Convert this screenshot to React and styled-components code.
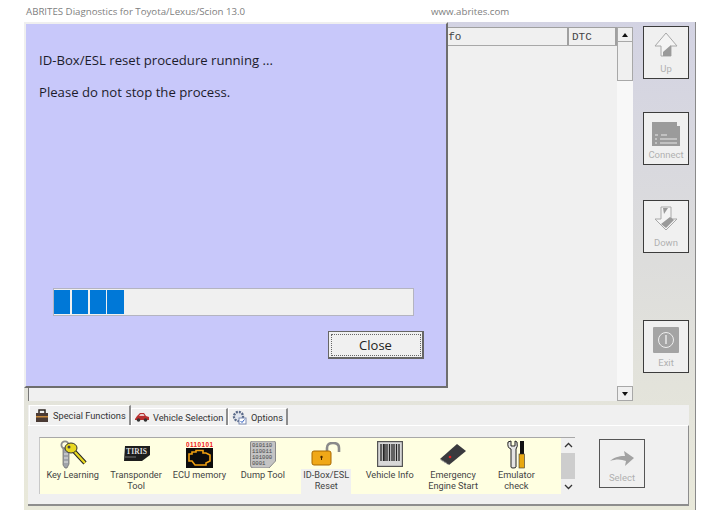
import React from "react";
import styled, { createGlobalStyle } from "styled-components";

const Global = createGlobalStyle`
  html, body { margin: 0; padding: 0; background: #fff; }
  body { width: 719px; height: 510px; overflow: hidden; font-family: Roboto, "Liberation Sans", sans-serif; }
`;

const Page = styled.div`
  width: 719px;
  height: 510px;
  position: relative;
  background: #fff;
  overflow: hidden;
`;

const TitleBar = styled.div`
  height: 22px;
  display: flex;
  align-items: center;
  padding-left: 26px;
  font-family: "Open Sans", sans-serif;
  font-size: 9.7px;
  color: #808080;
`;

const TitleText = styled.span`
  width: 405px;
`;

const Window = styled.div`
  width: 672px;
  height: 488px;
  margin-left: 24px;
  box-sizing: border-box;
  padding: 5px 6px 0 4px;
  border-right: 1px solid #8a8a8a;
  background: linear-gradient(#d3d3e3, #dcdcdc 45%, #e9e9da);
`;

const Upper = styled.div`
  display: flex;
  gap: 10px;
`;

const List = styled.div`
  width: 606px;
  height: 374px;
  display: flex;
  background: #f0f0f0;
  position: relative;
  overflow: hidden;
`;

const ListBody = styled.div`
  flex: 1;
  border-left: 1px solid #777;
`;

const HeaderRow = styled.div`
  display: flex;
  height: 19px;
  border-bottom: 1px solid #a8a8a8;
  border-top: 1px solid #a0a0a0;
  box-sizing: border-box;
  font-family: "Liberation Mono", monospace;
  font-size: 11px;
  color: #444;
`;

const HeaderCell = styled.div`
  width: ${(p) => p.$w}px;
  box-sizing: border-box;
  padding-left: 3px;
  line-height: 18px;
  border-right: 2px solid #a0a0a0;
`;

const ScrollTrack = styled.div`
  width: 16px;
  display: flex;
  flex-direction: column;
  background: #f8f8f8;
`;

const ScrollSpacer = styled.div`
  flex: 1;
`;

const ScrollBtn = styled.div`
  height: 15px;
  box-sizing: border-box;
  display: flex;
  align-items: center;
  justify-content: center;
  background: #f0f0f0;
  border: 1px solid #a8a8a8;
`;

const ScrollThumb = styled.div`
  height: 39px;
  box-sizing: border-box;
  background: #f0f0f0;
  border: 1px solid #a8a8a8;
  border-top: 0;
`;

const Arrow = styled.div`
  width: 0;
  height: 0;
  border-left: 3.5px solid transparent;
  border-right: 3.5px solid transparent;
  ${(p) => (p.$down ? "border-top: 4px solid #111;" : "border-bottom: 4px solid #111;")}
`;

const SideColumn = styled.div`
  width: 46px;
  display: flex;
  flex-direction: column;
  margin-top: -1px;
`;

const SideButton = styled.div`
  width: 46px;
  height: 53px;
  margin-top: ${(p) => p.$top || 0}px;
  box-sizing: border-box;
  border: 1px solid #3c3c3c;
  background: #f0f0f0;
  display: flex;
  flex-direction: column;
  align-items: center;
  justify-content: space-between;
  padding: ${(p) => p.$pad || 4}px 0 4px;
  font-size: 9.5px;
  color: #b0b0b0;
`;

const BottomPanel = styled.div`
  width: 661px;
  height: 101px;
  margin-top: 4px;
  display: flex;
  flex-direction: column;
`;

const TabStrip = styled.div`
  height: 20px;
  display: flex;
  align-items: flex-end;
  background: #f0f0f0;
  padding-left: 1px;
`;

const Tab = styled.div`
  height: ${(p) => (p.$active ? 20 : 17)}px;
  width: ${(p) => p.$w}px;
  box-sizing: border-box;
  display: flex;
  align-items: center;
  gap: 4px;
  padding-left: ${(p) => (p.$active ? 5 : 3)}px;
  font-size: 9.25px;
  white-space: nowrap;
  color: #333;
  background: #f0f0f0;
  border-top: 1px solid #fff;
  border-left: 1px solid #fff;
  border-right: 2px solid #8d8d8d;
`;

const TabBody = styled.div`
  flex: 1;
  display: flex;
  align-items: flex-start;
  background: #f0f0f0;
  box-sizing: border-box;
  padding: 11px 0 0 11px;
  border-top: 1px solid #fff;
  border-right: 1px solid #8d8d8d;
  border-bottom: 2px solid #8d8d8d;
`;

const Palette = styled.div`
  width: 536px;
  height: 57px;
  display: flex;
  box-sizing: border-box;
  background: #ffffe1;
  border-top: 1px solid #a8a8a8;
  border-left: 1px solid #c8c8c8;
`;

const Items = styled.div`
  flex: 1;
  display: flex;
  padding-left: 1px;
`;

const Item = styled.div`
  width: 63.4px;
  display: flex;
  flex-direction: column;
  align-items: center;
  padding-top: 1px;
  font-size: 9.2px;
  line-height: 11px;
  color: #444;
  text-align: center;
`;

const IconSlot = styled.div`
  height: 30px;
  display: flex;
  align-items: center;
  justify-content: center;
`;

const ItemLabel = styled.div`
  padding: 0 2px;
  height: 25px;
  box-sizing: border-box;
  white-space: nowrap;
  background: ${(p) => (p.$selected ? "#f0f0f0" : "transparent")};
`;

const PaletteScroll = styled.div`
  width: 14px;
  display: flex;
  flex-direction: column;
  align-items: center;
  background: #f0f0f0;
`;

const Chevron = styled.svg`
  width: 9px;
  height: 15px;
  flex: none;
`;

const PaletteThumb = styled.div`
  width: 14px;
  height: 26px;
  background: #cdcdcd;
`;

const SelectButton = styled(SideButton)`
  height: 49px;
  margin: 2px 0 0 24px;
  padding-top: 11px;
  border-color: #555;
  flex: none;
`;

const Dialog = styled.div`
  position: absolute;
  left: 24px;
  top: 22px;
  width: 424px;
  height: 366px;
  box-sizing: border-box;
  background: #c8c8fa;
  border-top: 2px solid #efefef;
  border-left: 2px solid #efefef;
  border-right: 2px solid #6e6e6e;
  border-bottom: 2px solid #6e6e6e;
  padding: 27px 0 0 13px;
  font-family: "Open Sans", sans-serif;
  color: #1c1c2c;
`;

const DialogLine = styled.div`
  font-size: 13.15px;
  line-height: 18px;
  margin-bottom: 14px;
`;

const Progress = styled.div`
  width: 361px;
  height: 28px;
  box-sizing: border-box;
  margin: 187px 0 0 14px;
  background: #f0f0f0;
  border: 1px solid #b4b4c0;
  padding: 1px 0;
  display: flex;
  gap: 1.4px;
`;

const ProgressBlock = styled.div`
  width: 16.4px;
  background: #0078d7;
`;

const CloseRow = styled.div`
  display: flex;
  justify-content: flex-end;
  margin: 15px 22px 0 0;
`;

const CloseButton = styled.div`
  width: 96px;
  height: 28px;
  box-sizing: border-box;
  background: #f0f0f0;
  border: 1px solid #666;
  border-right-width: 2px;
  border-bottom-width: 2px;
  outline: 1px dotted #666;
  outline-offset: -4px;
  display: flex;
  align-items: center;
  justify-content: center;
  font-size: 13px;
  color: #222;
`;

const UpIcon = () => (
  <svg width="24" height="25" viewBox="0 0 24 25">
    <path d="M12 1 L23 14 H17 V24 H7 V14 H1 Z" fill="#f4f4f4" stroke="#a8a8a8" />
    <path d="M17 13 V24 H9 V20 Z" fill="#9a9a9a" />
  </svg>
);

const DownIcon = () => (
  <svg width="24" height="25" viewBox="0 0 24 25">
    <path d="M7 1 H17 V13 H23 L12 24 L1 13 H7 Z" fill="#f4f4f4" stroke="#a8a8a8" />
    <path d="M9 2 H14 L10 8 Z M20 14 L12 22 L7 18 L16 11 Z" fill="#9a9a9a" />
  </svg>
);

const ConnectIcon = () => (
  <svg width="28" height="25" viewBox="0 0 28 25">
    <path d="M0 1 H25 V5 H28 V25 H0 Z" fill="#9b9b9b" />
    <path d="M3 14 H6 M9 14 H15 M3 18 H5 M8 18 H25 M3 22 H5 M8 22 H25" stroke="#e8e8e8" />
  </svg>
);

const ExitIcon = () => (
  <svg width="26" height="26" viewBox="0 0 26 26">
    <rect width="26" height="26" rx="1" fill="#a4a4a4" />
    <circle cx="13" cy="13" r="7.5" fill="none" stroke="#eee" />
    <path d="M13 8 V17" stroke="#eee" strokeWidth="1.4" />
  </svg>
);

const SelectIcon = () => (
  <svg width="24" height="15" viewBox="0 0 24 15">
    <path d="M0 10 C6 5 11 5 15 5 L14 0 L24 7 L15 15 L16 10 C11 8 6 8 0 10 Z" fill="#a2a2a2" />
  </svg>
);

const ToolboxIcon = () => (
  <svg width="14" height="14" viewBox="0 0 14 14">
    <rect x="1" y="4" width="12" height="9" fill="#4a3a34" />
    <path d="M4 4 V1 H10 V4" fill="none" stroke="#2c2420" strokeWidth="1.5" />
    <rect x="1" y="7" width="12" height="1.5" fill="#c88a3c" />
  </svg>
);

const CarIcon = () => (
  <svg width="14" height="10" viewBox="0 0 14 10">
    <path d="M0 7 L2 4 L5 1 H9 L11 4 L14 5 V8 H0 Z" fill="#b83030" />
    <circle cx="3.5" cy="8" r="1.8" fill="#333" />
    <circle cx="10.5" cy="8" r="1.8" fill="#333" />
    <path d="M5.5 2 H8.5 L9.5 4 H4 Z" fill="#e8c8c8" />
  </svg>
);

const GearIcon = () => (
  <svg width="15" height="15" viewBox="0 0 15 15">
    <circle cx="6.5" cy="6.5" r="4.5" fill="none" stroke="#5a6a8a" strokeWidth="2.4" strokeDasharray="2 1" />
    <circle cx="6.5" cy="6.5" r="3" fill="#dfe4ee" />
    <rect x="7" y="8" width="7" height="6" fill="#fff" stroke="#7a8ab0" />
    <path d="M8.5 11 L10 12.5 L12.5 9.5" fill="none" stroke="#2a5ac0" />
  </svg>
);

const KeyIcon = () => (
  <svg width="30" height="29" viewBox="0 0 30 29">
    <path d="M5 8 H11 V24 L9 28 H7 L5 25 Z" fill="#a0a4aa" stroke="#666" strokeWidth="0.7" />
    <path d="M6 14 H10 M6 18 H10 M6 22 H10" stroke="#e4e4e4" />
    <circle cx="7" cy="5" r="3.6" fill="none" stroke="#8c8c8c" strokeWidth="1.8" />
    <path d="M15 10 L27 23" stroke="#222" strokeWidth="4.4" />
    <path d="M15 10 L27 23" stroke="#e8d820" strokeWidth="2.4" />
    <ellipse cx="13" cy="8" rx="6" ry="5" fill="#e8d820" stroke="#333" />
    <circle cx="11" cy="7" r="1.5" fill="#444" />
  </svg>
);

const TirisIcon = () => (
  <svg width="28" height="16" viewBox="0 0 28 16">
    <path d="M3 0 H28 V9 L20 15 H2 Z" fill="#1d1d1d" />
    <text x="4" y="8" fontFamily="Liberation Serif, serif" fontSize="7.5" fontWeight="700" fill="#ddd" textLength="21">TIRIS</text>
    <path d="M3 11 H14" stroke="#777" />
  </svg>
);

const EcuIcon = () => (
  <svg width="27" height="27" viewBox="0 0 27 27">
    <text x="0" y="6" fontFamily="Liberation Sans, sans-serif" fontSize="6.4" fontWeight="700" fill="#f01818" textLength="27">0110101</text>
    <rect y="7" width="27" height="20" fill="#0c0c0c" />
    <path d="M3 13 H6 V11 H10 V9.5 H17 V12 H20 L24 14 V20 L20 22 V24 H9 L6 20 H3 Z" fill="none" stroke="#f0a010" strokeWidth="1.6" />
  </svg>
);

const DumpIcon = () => (
  <svg width="26" height="27" viewBox="0 0 26 27">
    <path d="M2 0 H24 Q25.500 0 25.500 2 V20 L19 27 H3 Q0.500 27 0.500 24 V2 Q0.500 0 2 0 Z" fill="#c4c4c4" stroke="#8a8a8a" />
    <text fontFamily="Liberation Mono, monospace" fontSize="5.6" fill="#444">
      <tspan x="2" y="6">010110</tspan>
      <tspan x="2" y="12">110011</tspan>
      <tspan x="2" y="18">101000</tspan>
      <tspan x="2" y="24">0001</tspan>
    </text>
  </svg>
);

const LockIcon = () => (
  <svg width="30" height="24" viewBox="0 0 30 24">
    <path d="M16 9 V6 Q16 1 22 1 Q28 1 28 6 V10" fill="none" stroke="#8a8a8a" strokeWidth="2.6" />
    <rect x="1" y="9" width="19" height="14" rx="2" fill="#f0a818" stroke="#a86800" />
    <circle cx="10.500" cy="15" r="1.2" fill="#4a2a00" />
    <path d="M10.500 15 V18" stroke="#4a2a00" />
  </svg>
);

const BarcodeIcon = () => (
  <svg width="26" height="26" viewBox="0 0 26 26">
    <rect x="0.500" y="0.500" width="25" height="25" fill="#d8d8d8" stroke="#555" strokeWidth="1.4" />
    <path d="M4 3 V20 M6.500 3 V20 M8 3 V20 M10 3 V20 M12.500 3 V20 M15 3 V20 M17 3 V20 M19.500 3 V20 M22 3 V20" stroke="#222" strokeWidth="1.3" />
  </svg>
);

const ChipIcon = () => (
  <svg width="26" height="22" viewBox="0 0 26 22">
    <path d="M0 16 L17 1 L26 8 L9 22 Z" fill="#3a3a3e" />
    <path d="M1 17 L9 22" stroke="#aaa" strokeWidth="1.4" strokeDasharray="1 1" />
    <circle cx="10" cy="14" r="1.3" fill="#e82020" />
  </svg>
);

const ToolsIcon = () => (
  <svg width="18" height="29" viewBox="0 0 18 29">
    <path d="M1 2 Q0 8 4 9 V27 Q4 28 6 28 Q9 28 9 27 V9 Q11 7 10 2 L8 1 V6 H4 V1 Z" fill="#e4e4e4" stroke="#222" />
    <rect x="13" y="1" width="4" height="13" fill="#111" />
    <rect x="12" y="14" width="5.500" height="14" fill="#e8a810" stroke="#333" strokeWidth="0.6" />
  </svg>
);

const items = [
  { icon: <KeyIcon />, label: ["Key Learning"] },
  { icon: <TirisIcon />, label: ["Transponder", "Tool"] },
  { icon: <EcuIcon />, label: ["ECU memory"] },
  { icon: <DumpIcon />, label: ["Dump Tool"] },
  { icon: <LockIcon />, label: ["ID-Box/ESL", "Reset"], selected: true },
  { icon: <BarcodeIcon />, label: ["Vehicle Info"] },
  { icon: <ChipIcon />, label: ["Emergency", "Engine Start"] },
  { icon: <ToolsIcon />, label: ["Emulator", "check"] },
];

export default function App() {
  return (
    <Page>
      <Global />
      <TitleBar>
        <TitleText>ABRITES Diagnostics for Toyota/Lexus/Scion 13.0</TitleText>
        <span>www.abrites.com</span>
      </TitleBar>
      <Window>
        <Upper>
          <List>
            <ListBody>
              <HeaderRow>
                <HeaderCell $w={403}></HeaderCell>
                <HeaderCell $w={137}>Info</HeaderCell>
                <HeaderCell $w={48}>DTC</HeaderCell>
              </HeaderRow>
            </ListBody>
            <ScrollTrack>
              <ScrollBtn><Arrow /></ScrollBtn>
              <ScrollThumb />
              <ScrollSpacer />
              <ScrollBtn><Arrow $down /></ScrollBtn>
            </ScrollTrack>
          </List>
          <SideColumn>
            <SideButton $pad={5}><UpIcon />Up</SideButton>
            <SideButton $top={33} $pad={8}><ConnectIcon />Connect</SideButton>
            <SideButton $top={35} $pad={5}><DownIcon />Down</SideButton>
            <SideButton $top={67} $pad={6}><ExitIcon />Exit</SideButton>
          </SideColumn>
        </Upper>
        <BottomPanel>
          <TabStrip>
            <Tab $active $w={102}><ToolboxIcon />Special Functions</Tab>
            <Tab $w={97}><CarIcon />Vehicle Selection</Tab>
            <Tab $w={60}><GearIcon />Options</Tab>
          </TabStrip>
          <TabBody>
            <Palette>
              <Items>
                {items.map((item) => (
                  <Item key={item.label[0]}>
                    <IconSlot>{item.icon}</IconSlot>
                    <ItemLabel $selected={item.selected}>
                      {item.label.map((line) => <div key={line}>{line}</div>)}
                    </ItemLabel>
                  </Item>
                ))}
              </Items>
              <PaletteScroll>
                <Chevron viewBox="0 0 9 15"><path d="M1 9 L4.500 5.500 L8 9" fill="none" stroke="#333" strokeWidth="1.3" /></Chevron>
                <PaletteThumb />
                <ScrollSpacer />
                <Chevron viewBox="0 0 9 15"><path d="M1 6 L4.500 9.500 L8 6" fill="none" stroke="#333" strokeWidth="1.3" /></Chevron>
              </PaletteScroll>
            </Palette>
            <SelectButton><SelectIcon />Select</SelectButton>
          </TabBody>
        </BottomPanel>
      </Window>
      <Dialog>
        <DialogLine>ID-Box/ESL reset procedure running ...</DialogLine>
        <DialogLine>Please do not stop the process.</DialogLine>
        <Progress>
          {[0, 1, 2, 3].map((i) => <ProgressBlock key={i} />)}
        </Progress>
        <CloseRow><CloseButton>Close</CloseButton></CloseRow>
      </Dialog>
    </Page>
  );
}
